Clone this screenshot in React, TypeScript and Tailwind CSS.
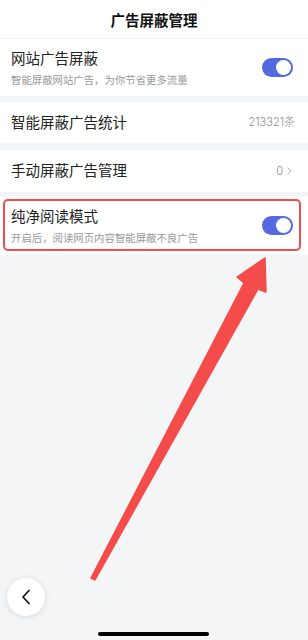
import React from "react";

const FONT = "font-['Inter','Noto_Sans_CJK_SC',sans-serif]";

function Toggle() {
  return (
    <div className="w-[31px] h-[19px] rounded-full bg-[#5468e0] flex items-center justify-end p-[2px] flex-shrink-0">
      <div className="w-[15px] h-[15px] rounded-full bg-white" />
    </div>
  );
}

function SwitchRow({ title, sub }: { title: string; sub: string }) {
  return (
    <div className="flex items-center justify-between px-[11px] h-full">
      <div className="flex flex-col pt-[2px]">
        <p className="text-[14.5px] leading-[20px] text-[#222]">{title}</p>
        <p className="text-[10.4px] leading-[14px] text-[#9a9a9a] mt-[5px]">{sub}</p>
      </div>
      <div className="mr-[4px]">
        <Toggle />
      </div>
    </div>
  );
}

export default function App() {
  return (
    <div className={`relative w-full h-[640px] bg-[#f4f5f7] overflow-hidden flex flex-col ${FONT}`}>
      {/* Header */}
      <header className="h-[38px] bg-white flex items-center justify-center flex-shrink-0">
        <h1 className="text-[14.5px] font-semibold text-[#111] mt-[4px]">广告屏蔽管理</h1>
      </header>

      {/* 网站广告屏蔽 */}
      <div className="mt-px h-[57px] bg-white">
        <SwitchRow title="网站广告屏蔽" sub="智能屏蔽网站广告，为你节省更多流量" />
      </div>

      {/* 统计 */}
      <div className="mt-[6px] h-[41px] bg-white flex items-center justify-between px-[11px]">
        <p className="text-[14.5px] text-[#222]">智能屏蔽广告统计</p>
        <span className="text-[11px] text-[#8c8c8c] font-light mr-[2px]">213321条</span>
      </div>

      {/* 手动管理 */}
      <div className="mt-[7px] h-[42px] bg-white flex items-center justify-between px-[11px]">
        <p className="text-[14.5px] text-[#222]">手动屏蔽广告管理</p>
        <div className="flex items-center gap-[4px] mr-[5px]">
          <span className="text-[11px] text-[#8c8c8c] font-light">0</span>
          <svg width="5" height="8" viewBox="0 0 5 8" fill="none">
            <path d="M1 1l3 3-3 3" stroke="#b5b5b5" strokeWidth="1" strokeLinecap="round" strokeLinejoin="round" />
          </svg>
        </div>
      </div>

      {/* 纯净阅读模式 */}
      <div className="relative mt-[4px] h-[59px] bg-white">
        <SwitchRow title="纯净阅读模式" sub="开启后，阅读网页内容智能屏蔽不良广告" />
        <div className="absolute left-[3px] right-[7px] top-[3px] bottom-[4px] border-[2.5px] border-[#f44c4a] rounded-[5px] pointer-events-none" />
      </div>

      {/* Annotation arrow */}
      <svg className="absolute inset-0 pointer-events-none" width="308" height="640" viewBox="0 0 308 640">
        <path
          d="M91 578 L244 283 L237 277 L265 258 L266 292 L258 289 L95 580 Z"
          fill="#f44c4a"
          stroke="#f44c4a"
          strokeWidth="1.5"
          strokeLinejoin="round"
        />
      </svg>

      {/* Back button */}
      <button className="absolute left-[7px] top-[578px] w-[38px] h-[38px] rounded-full bg-white shadow-[0_1px_6px_rgba(0,0,0,0.12)] flex items-center justify-center">
        <svg width="10" height="16" viewBox="0 0 10 16" fill="none">
          <path d="M8 1.5L2 8l6 6.5" stroke="#1a1a1a" strokeWidth="1.8" strokeLinecap="round" strokeLinejoin="round" />
        </svg>
      </button>

      {/* Home indicator */}
      <div className="absolute left-[98px] top-[632px] w-[111px] h-[4px] rounded-full bg-black" />
    </div>
  );
}
